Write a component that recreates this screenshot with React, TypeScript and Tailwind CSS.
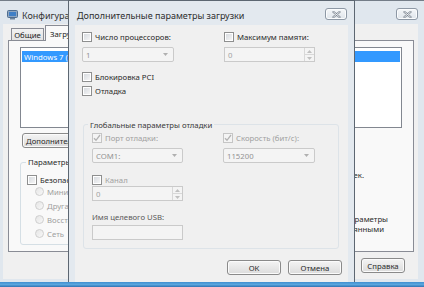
import React from "react";
import clsx from "clsx";

function CloseButton({ className }: { className?: string }) {
  return (
    <div
      className={clsx(
        "flex h-[12px] w-[22px] shrink-0 items-center justify-center rounded-[3px] border border-[#8d98a5] bg-linear-to-b from-[#f5f7f9] to-[#dfe5eb] shadow-[inset_0_0_0_1px_#fbfcfd]",
        className
      )}
    >
      <svg width="9" height="7" viewBox="0 0 9 7">
        <path d="M1.5 1 L7.5 6 M7.5 1 L1.5 6" stroke="#7b848f" strokeWidth="2.2" strokeLinecap="round" />
        <path d="M1.5 1 L7.5 6 M7.5 1 L1.5 6" stroke="#f3f5f7" strokeWidth="0.9" strokeLinecap="round" />
      </svg>
    </div>
  );
}

function AppIcon() {
  return (
    <svg width="11" height="10" viewBox="0 0 11 10" className="mt-[9px] ml-[4px] shrink-0">
      <rect x="0.5" y="0.5" width="10" height="7" rx="1" fill="#8fa6c0" stroke="#4f6d8f" />
      <rect x="2" y="2" width="7" height="4" fill="#3f7fc6" />
      <rect x="3" y="8" width="5" height="1.5" fill="#6d849c" />
    </svg>
  );
}

function Checkbox({ checked = false, disabled = false }: { checked?: boolean; disabled?: boolean }) {
  return (
    <span
      className={clsx(
        "inline-flex h-[10px] w-[10px] shrink-0 items-center justify-center border",
        disabled
          ? "border-[#c5c5c5] bg-[#f4f4f4]"
          : "border-[#8e8f8f] bg-linear-to-br from-[#d3d7dc] to-[#f9f9f9] shadow-[inset_0_0_0_1px_#ffffff]"
      )}
    >
      {checked && (
        <svg width="8" height="8" viewBox="0 0 8 8">
          <path d="M1 4.2 L3 6.3 L7 1" fill="none" stroke={disabled ? "#b3b3b3" : "#333"} strokeWidth="1.3" />
        </svg>
      )}
    </span>
  );
}

function Radio() {
  return (
    <span className="inline-block h-[9px] w-[9px] shrink-0 rounded-full border border-[#cfcfcf] bg-linear-to-br from-[#e6e6e6] to-[#f7f7f7]" />
  );
}

function CheckRow({
  label,
  checked,
  disabled,
  muted,
}: {
  label: string;
  checked?: boolean;
  disabled?: boolean;
  muted?: boolean;
}) {
  return (
    <div className="flex h-[10px] items-center gap-[3px]">
      <Checkbox checked={checked} disabled={disabled} />
      <span className={clsx("whitespace-nowrap", muted ? "text-[#a0a0a0]" : "text-[#2a2a2a]")}>{label}</span>
    </div>
  );
}

function Arrow() {
  return (
    <svg width="5" height="3" viewBox="0 0 5 3">
      <path d="M0 0 L5 0 L2.5 3 Z" fill="#b0b0b0" />
    </svg>
  );
}

function Combo({ value, width }: { value: string; width: string }) {
  return (
    <div
      className={clsx(
        "flex h-[15px] items-center justify-between rounded-[2px] border border-[#cacaca] bg-[#f4f4f4] pl-[3px] pr-[5px] text-[#939393]",
        width
      )}
    >
      <span>{value}</span>
      <Arrow />
    </div>
  );
}

function Spin({ value, width }: { value: string; width: string }) {
  return (
    <div className={clsx("flex h-[15px] border border-[#cacaca] bg-[#f4f4f4] text-[#a3a3a3]", width)}>
      <span className="flex flex-1 items-center pl-[3px]">{value}</span>
      <div className="flex w-[10px] flex-col border-l border-[#d8d8d8]">
        <div className="flex flex-1 items-center justify-center border-b border-[#d8d8d8]">
          <svg width="5" height="3" viewBox="0 0 5 3">
            <path d="M0 3 L5 3 L2.5 0 Z" fill="#c0c0c0" />
          </svg>
        </div>
        <div className="flex flex-1 items-center justify-center">
          <svg width="5" height="3" viewBox="0 0 5 3">
            <path d="M0 0 L5 0 L2.5 3 Z" fill="#c0c0c0" />
          </svg>
        </div>
      </div>
    </div>
  );
}

function Button({ label, className }: { label: string; className: string }) {
  return (
    <div
      className={clsx(
        "flex h-[15px] shrink-0 items-center whitespace-nowrap rounded-[3px] border border-[#8a8a8a] bg-linear-to-b from-[#f4f4f4] to-[#dcdcdc] text-[#2a2a2a] shadow-[inset_0_0_0_1px_#fbfbfb]",
        className
      )}
    >
      {label}
    </div>
  );
}

function RadioRow({ label }: { label: string }) {
  return (
    <div className="flex h-[9px] items-center gap-[3px]">
      <Radio />
      <span className="whitespace-nowrap">{label}</span>
    </div>
  );
}

function SystemConfig() {
  return (
    <div className="flex h-[282px] flex-col border-t border-[#747d88] bg-[#e0e7ee] pb-[3px] pl-[3px] pr-[6px]">
      <div className="flex h-[23px] shrink-0 items-start">
        <AppIcon />
        <span className="mt-[10px] ml-[4px] whitespace-nowrap text-[9px] leading-[10px] text-[#333]">
          Конфигурация системы
        </span>
        <CloseButton className="mt-[7px] ml-auto" />
      </div>
      <div className="flex flex-1 flex-col bg-[#f0f0f0] pt-[1px]">
        {/* tabs */}
        <div className="relative z-10 -mb-[1px] flex h-[16px] items-end pl-[8px]">
          <div className="mb-[1px] flex h-[12px] w-[33px] items-center justify-center border border-b-0 border-[#898c95] bg-linear-to-b from-[#f3f3f3] to-[#e2e2e2] text-[#222]">
            Общие
          </div>
          <div className="ml-[1px] flex h-[16px] w-[60px] items-center border border-b-0 border-[#898c95] bg-[#f9f9f9] pl-[4px] text-[#222]">
            Загрузка
          </div>
        </div>
        {/* tab page */}
        <div className="ml-[5px] mr-[4px] flex h-[212px] flex-col border border-[#898c95] bg-[#f9f9f9] px-[11px] pt-[6px]">
          <div className="h-[81px] border border-[#828790] bg-white px-[1px] pt-[3px]">
            <div className="flex h-[11px] items-center whitespace-nowrap bg-[#3399ff] pl-[2px] text-white">
              Windows 7 (C:\Windows) : Текущая операционная система; ОС
            </div>
          </div>
          <Button label="Дополнительные параметры..." className="mt-[5px] ml-[2px] w-[130px] pl-[3px]" />
          <div className="mt-[14px] flex">
            <div className="relative h-[83px] w-[250px] shrink-0 rounded-[3px] border border-[#d5dfe5] pl-[6px] pt-[12px]">
              <span className="absolute -top-[6px] left-[5px] whitespace-nowrap bg-[#f9f9f9] px-[2px] text-[#2a2a2a]">
                Параметры загрузки
              </span>
              <CheckRow label="Безопасный режим" />
              <div className="mt-[2px] ml-[8px] flex flex-col gap-[5px] text-[#a0a0a0]">
                <RadioRow label="Минимальная" />
                <RadioRow label="Другая оболочка" />
                <RadioRow label="Восстановление Active Directory" />
                <RadioRow label="Сеть" />
              </div>
            </div>
            <div className="flex flex-1 flex-col text-[#2a2a2a]">
              <div className="mt-[8px] flex justify-end pr-[38px]">
                <span className="whitespace-nowrap">Таймаут: 30 сек.</span>
              </div>
              <div className="mt-[34px] flex justify-end pr-[14px]">
                <span className="whitespace-nowrap">Сделать эти параметры</span>
              </div>
              <div className="flex justify-end pr-[18px]">
                <span className="whitespace-nowrap">загрузки постоянными</span>
              </div>
            </div>
          </div>
        </div>
        <div className="mt-[6px] flex justify-end gap-[6px] pr-[13px]">
          <Button label="ОК" className="w-[44px] justify-center" />
          <Button label="Отмена" className="w-[44px] justify-center" />
          <Button label="Применить" className="w-[44px] justify-center" />
          <Button label="Справка" className="w-[44px] justify-center" />
        </div>
      </div>
    </div>
  );
}

function BootOptionsDialog() {
  return (
    <div className="absolute top-0 left-[68px] z-20 flex h-[282px] w-[287px] flex-col border-x border-t border-[#5d6772] bg-[#e3e9ef]">
      <div className="flex h-[24px] shrink-0 items-start pr-[7px] pl-[8px]">
        <span className="mt-[10px] whitespace-nowrap text-[9px] leading-[10px] text-[#2e2e2e]">
          Дополнительные параметры загрузки
        </span>
        <CloseButton className="mt-[7px] ml-auto" />
      </div>
      <div className="mx-[6px] flex flex-1 flex-col bg-[#f0f0f0] pt-[7px] pr-[6px] pl-[7px]">
        <div className="grid grid-cols-[142px_1fr]">
          <CheckRow label="Число процессоров:" />
          <CheckRow label="Максимум памяти:" />
          <div className="mt-[5px]">
            <Combo value="1" width="w-[92px]" />
          </div>
          <div className="mt-[5px]">
            <Spin value="0" width="w-[91px]" />
          </div>
        </div>
        <div className="mt-[10px]">
          <CheckRow label="Блокировка PCI" />
        </div>
        <div className="mt-[4px]">
          <CheckRow label="Отладка" />
        </div>
        <div className="relative mt-[28px] ml-[1px] w-[256px] rounded-[3px] border border-[#dde3e8] pt-[8px] pb-[8px] pl-[8px]">
          <span className="absolute -top-[5px] left-[4px] bg-[#f0f0f0] px-[2px] text-[#3a3a3a]">
            Глобальные параметры отладки
          </span>
          <div className="grid grid-cols-[131px_1fr]">
            <CheckRow label="Порт отладки:" checked disabled muted />
            <CheckRow label="Скорость (бит/с):" checked disabled muted />
            <div className="mt-[5px]">
              <Combo value="COM1:" width="w-[91px]" />
            </div>
            <div className="mt-[5px]">
              <Combo value="115200" width="w-[92px]" />
            </div>
          </div>
          <div className="mt-[12px]">
            <CheckRow label="Канал" muted />
          </div>
          <div className="mt-[1px]">
            <Spin value="0" width="w-[91px]" />
          </div>
          <div className="mt-[11px] leading-[10px] text-[#5a5a5a]">Имя целевого USB:</div>
          <div className="mt-[3px] h-[15px] w-[91px] border border-[#cacaca] bg-[#f4f4f4]" />
        </div>
        <div className="mt-[11px] flex justify-end gap-[7px]">
          <Button label="ОК" className="w-[54px] justify-center" />
          <Button label="Отмена" className="w-[54px] justify-center" />
        </div>
      </div>
    </div>
  );
}

function Taskbar() {
  return <div className="h-[5px] bg-linear-to-b from-[#3f8fd0] via-[#5aa6de] to-[#2f74b4]" />;
}

export default function App() {
  return (
    <div className="relative h-[287px] w-[424px] overflow-hidden bg-[#e0e7ee] font-['Noto_Sans',sans-serif] text-[7.75px] leading-[10px] text-[#222]">
      <SystemConfig />
      <Taskbar />
      <BootOptionsDialog />
    </div>
  );
}
